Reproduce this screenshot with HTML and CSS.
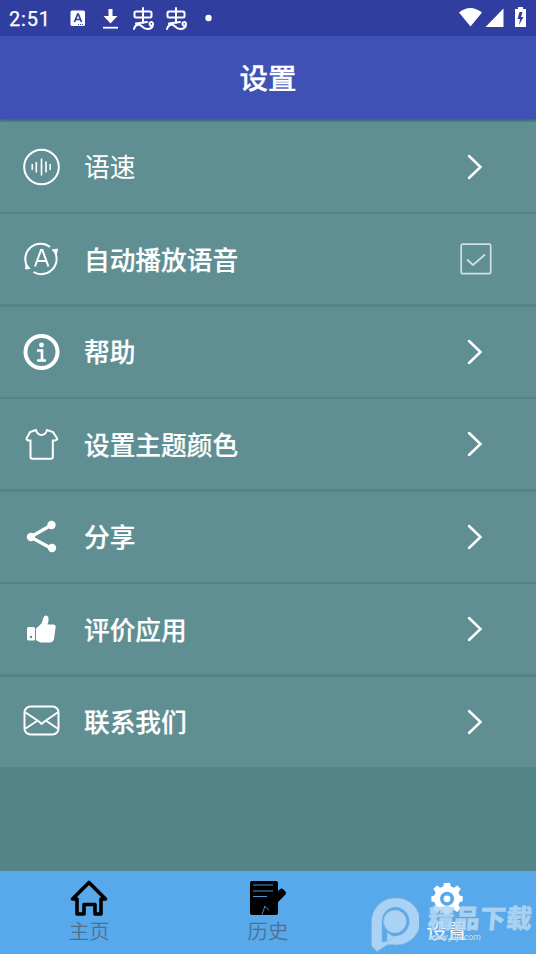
FILE: index.html
```html
<!DOCTYPE html>
<html lang="zh-CN">
<head>
<meta charset="utf-8">
<title>设置</title>
<link rel="stylesheet" href="styles.css">
</head>
<body>
<div class="app">
  <div class="status">
    <span class="time">2:51</span>
    <svg class="status-left" width="150" height="36" viewBox="0 0 150 36">
      <rect x="5.500" y="10.500" width="14.500" height="15.500" rx="1.500" fill="#fff"/>
      <path d="M9.500 22l3.200-8h.6l3.200 8M10.700 19.500h4.600" fill="none" stroke="#303e9f" stroke-width="1.700"/>
      <path d="M13 24.500h6" stroke="#303e9f" stroke-dasharray="1 1"/>
      <path d="M43.500 9h4v7h5l-7 7.500-7-7.500h5z" fill="#fff"/><path d="M38 27.700h15" stroke="#fff" stroke-width="1.800"/>
      <g id="bug" fill="none" stroke="#fff" stroke-width="2" stroke-linecap="round" stroke-linejoin="round"><path d="M78 8v15M71 11.500h14q1.500 0 1.500 1.500v3q0 1.500-1.500 1.500h-14q-1.500 0-1.500-1.500v-3q0-1.500 1.500-1.500zM69 29q1-4 4.500-4.500c3.500 0 4 4.500 8.500 4.500s6-2 6-5-4-2-3.500 0 1.500 2 2.500 1.500M71 23.500l11-1.500"/></g>
      <use href="#bug" x="33"/>
      <circle cx="143.500" cy="18" r="3.200" fill="#fff"/>
    </svg>
    <svg class="status-right" width="80" height="36" viewBox="0 0 80 36" fill="#fff">
      <path d="M3 12.500Q14 3.500 26 12.500L14.500 26.500zM29.500 27L47.500 8.500V27zM59 9h3V7h5v2h3v18H59z"/><path d="M63.500 12l-2 7h2.500l-1 6 4.500-8h-2.500l1.500-5z" fill="#303e9f"/>
    </svg>
  </div>
  <h1 class="header">设置</h1>
  <main class="list">
    <div class="row">
      <svg class="icon" viewBox="0 0 40 40"><circle cx="20.500" cy="20" r="17.300"/><path d="M11.300 17v6M15.300 15v10.500M20.500 11.500v17M25 14.500v11M29.200 17v6" stroke-width="1.600"/></svg>
      <span class="label light">语速</span><svg class="arrow" viewBox="0 0 16 26"><path d="M2 2l11.500 11L2 24"/></svg>
    </div>
    <div class="row">
      <svg class="icon" viewBox="0 0 40 40" stroke-width="1.600"><path d="M29 8A15.300 15.300 0 0 0 6.500 28M12.500 33A15.300 15.300 0 0 0 34 13M14 27.500l6-16.500h1.400l6 16.500M16 22h9.500"/><path d="M31 11l5.500-1-1 5zM5 25.500l4 4-4.500.5z" fill="#fff" stroke-width="1"/></svg>
      <span class="label">自动播放语音</span><svg class="check" viewBox="0 0 32 32"><rect x="1.200" y="1.200" width="29.500" height="29.500" rx="1.500"/><path d="M7 16.500l6 5.500L25 11.500"/></svg>
    </div>
    <div class="row">
      <svg class="icon" viewBox="0 0 40 40"><circle cx="20.500" cy="20" r="16" stroke-width="4"/><circle cx="20.500" cy="13" r="2.400" fill="#fff" stroke="none"/><path d="M16 18.500h5v10M16 28.500h9" stroke-width="2.700"/></svg>
      <span class="label">帮助</span><svg class="arrow" viewBox="0 0 16 26"><path d="M2 2l11.500 11L2 24"/></svg>
    </div>
    <div class="row">
      <svg class="icon" viewBox="0 0 40 40" stroke-width="1.600"><path d="M15 6L9 8l-3.500 6.500q-.3 1.700 2.500 2H9.500v16.500q0 1.800 2 1.800h18.500q1.800 0 1.800-1.800V16.500h2q2.700-.3 2.400-2L32 8l-6-2Q24.500 11 20.500 11T15 6z"/></svg>
      <span class="label">设置主题颜色</span><svg class="arrow" viewBox="0 0 16 26"><path d="M2 2l11.500 11L2 24"/></svg>
    </div>
    <div class="row">
      <svg class="icon" viewBox="0 0 40 40"><path d="M30.500 8L9.500 20l21 11.500" stroke-width="3.300"/><g fill="#fff" stroke="none"><circle cx="30.500" cy="8" r="4.200"/><circle cx="10" cy="20" r="4.200"/><circle cx="31" cy="31" r="4.200"/></g></svg>
      <span class="label">分享</span><svg class="arrow" viewBox="0 0 16 26"><path d="M2 2l11.500 11L2 24"/></svg>
    </div>
    <div class="row">
      <svg class="icon" viewBox="0 0 40 40"><path fill="#fff" stroke="none" d="M7.500 18h5q1.500 0 1.500 1.500V30q0 1.500-1.500 1.500h-5Q6 31.500 6 30V19.500Q6 18 7.500 18zM15 19.500l5.500-5 2-6q1-3 4-1.500 1.500 1.500 1 5l-1 3.500h6q3 .5 2 3.500L33 30q-.5 3-3 3.500H20q-3-.8-5-2.500z"/><circle cx="10" cy="28" r="1.200" fill="#5f8f93" stroke="none"/></svg>
      <span class="label">评价应用</span><svg class="arrow" viewBox="0 0 16 26"><path d="M2 2l11.500 11L2 24"/></svg>
    </div>
    <div class="row">
      <svg class="icon" viewBox="0 0 40 40" stroke-width="1.800"><rect x="3.500" y="4.500" width="34" height="28" rx="6"/><path d="M4.500 10.500L18 19.500l2.500 2.500 3-2.500 13-9M4.500 26.500L16 19M36.500 26.500L25.500 19"/></svg>
      <span class="label">联系我们</span><svg class="arrow" viewBox="0 0 16 26"><path d="M2 2l11.500 11L2 24"/></svg>
    </div>
  </main>
  <nav class="tabs">
    <div class="tab"><svg class="tab-icon" viewBox="0 0 40 40"><path d="M3.500 21L20 4.500 36.500 21H32v15h-6v-9.500H15V36H8V21z" fill="none" stroke="#000" stroke-width="3.600" stroke-linejoin="round"/></svg><span>主页</span></div>
    <div class="tab"><svg class="tab-icon" viewBox="0 0 40 40"><rect x="2" y="3" width="28" height="34" rx="2"/><path d="M5 7h20M5 13h20M5 18.500h14" stroke="#5295cf" stroke-width="1.100"/><path d="M33.500 12.500l2.500 2.500L21 30.500 16 34l2.500-6z" stroke="#000" stroke-width="4" stroke-linejoin="round"/><path d="M16.500 28l4.500 4.500M17 28l-3 8.500" stroke="#58a9eb" stroke-width=".8"/></svg><span>历史</span></div>
    <div class="tab active"><svg class="tab-icon" viewBox="0 0 40 40"><path fill="#fff" fill-rule="evenodd" d="M17 5h6l.8 3.500 3 1.200 3.500-2.300 3.500 3.500-2.300 3.400 1.200 3.200 3 .7v5.100l-3 .8-1.200 3 2.300 3.500-3.500 3.500-3.500-2.300-3 1.200-.8 3.500h-6l-.8-3.500-3-1.200-3.400 2.300-3.500-3.500 2.300-3.500-1.200-3-3-.8v-5.100l3-.7 1.200-3.200-2.300-3.400 3.500-3.500 3.400 2.300 3-1.200zM20 13.800a7 7 0 1 0 .1 0z"/><circle cx="20" cy="20.800" r="3.400" fill="#fff"/></svg><span>设置</span></div>
    <div class="watermark">
      <svg class="mark" viewBox="0 0 50 58"><path d="M26 2a23.500 23.500 0 1 1-3 46.500l-5 .5-10 6.500L2.500 50V25.500A23.500 23.500 0 0 1 26 2z"/><path class="mark-gap" d="M26 11a14.500 14.500 0 1 1-4 28.500L17 45.500l-4 .5V25.500A14 14 0 0 1 26 11z"/><circle cx="26" cy="25.500" r="11.500"/><path d="M18 36.500l7 4.500-7 5z"/></svg>
      <div class="brand"><b>精品下载</b><small>www.j9p.com</small></div>
    </div>
  </nav>
</div>
</body>
</html>
```
FILE: styles.css
```css
* { box-sizing: border-box; }
body { margin: 0; font-family: Roboto, "Noto Sans CJK SC", sans-serif; color: #fff; }
.app { width: 536px; height: 954px; display: flex; flex-direction: column; background: #538588; overflow: hidden; }
.status { height: 36px; background: #303e9f; display: flex; align-items: center; padding: 0 0 0 9px; }
.time { width: 56px; font-size: 20px; letter-spacing: .8px; font-weight: 400; -webkit-text-stroke: .25px #fff; padding-top: 1px; }
.status-right { margin-left: auto; }
.header { margin: 0; height: 83px; padding-bottom: 3px; background: #3f51b5; display: flex; align-items: center; justify-content: center; font-size: 28.500px; font-weight: 500; -webkit-text-stroke: .3px #fff; box-shadow: 0 1px 3px #2c5d64; }
.list { padding-top: 2.500px; display: flex; flex-direction: column; gap: 2.500px; }
.row { height: 90px; background: #5f8f93; display: flex; align-items: center; padding: 0 44px 0 21px; }
.icon { width: 40px; height: 40px; fill: none; stroke: #fff; stroke-width: 2; }
.label { margin-left: 23px; padding-top: 3px; flex: 1; font-size: 25.700px; line-height: 38px; font-weight: 500; -webkit-text-stroke: .2px #fff; }
.light { font-weight: 400; -webkit-text-stroke: 0; }
.arrow { width: 16px; height: 26px; margin-right: 9px; fill: none; stroke: #fff; stroke-width: 2.500; stroke-linecap: round; }
.check { width: 32px; height: 32px; fill: none; stroke: #d4e0e0; stroke-width: 1.700; }
.tabs { position: relative; height: 83px; margin-top: auto; background: #58a9eb; display: grid; grid-template-columns: repeat(3, 1fr); }
.tab { display: flex; flex-direction: column; align-items: center; padding-top: 7px; font-size: 20.500px; line-height: 29px; color: #536f8c; font-weight: 350; }
.tab-icon { width: 40px; height: 40px; }
.active { color: #fff; font-weight: 400; }
.watermark { position: absolute; left: 369px; top: 25px; display: flex; color: #b4d8f6; }
.mark { width: 50px; height: 58px; fill: #a9d2f5; stroke: #86b3da; stroke-width: .6; }
.mark-gap { fill: #58a9eb; }
.brand { display: flex; flex-direction: column; margin-left: 9px; }
.brand b { font-size: 26px; line-height: 46px; font-weight: 900; white-space: nowrap; transform: skewX(-5deg); -webkit-text-stroke: .4px #b4d8f6; text-shadow: 0 0 1px #6f8ba6; opacity: .88; }
.brand small { font-size: 9px; line-height: 8px; margin-top: -9px; font-style: italic; color: #d3e7f9; text-shadow: 0 0 1px #6f8ba6; }
```
